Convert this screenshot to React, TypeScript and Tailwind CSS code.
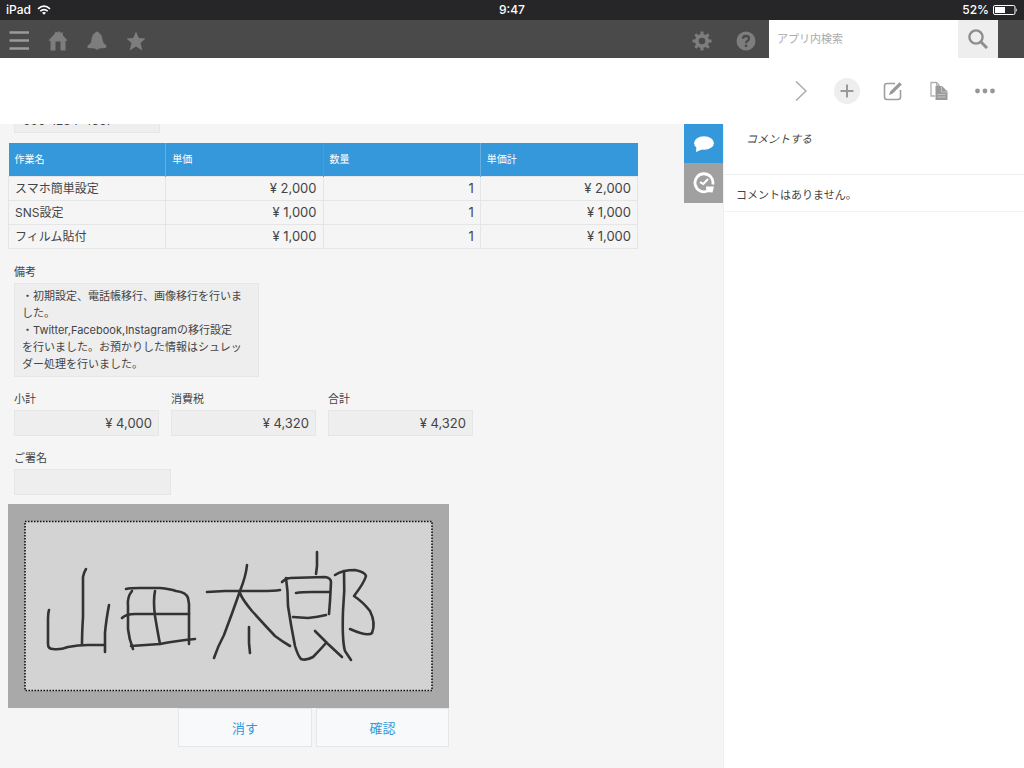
import React, { useState } from 'react';

interface WorkRow {
  name: string;
  price: string;
  count: string;
  total: string;
}

interface FieldProps {
  id: string;
  label: string;
  value: string;
  widthClass: string;
}

const workRows: WorkRow[] = [
  { name: 'スマホ簡単設定', price: '¥ 2,000', count: '1', total: '¥ 2,000' },
  { name: 'SNS設定', price: '¥ 1,000', count: '1', total: '¥ 1,000' },
  { name: 'フィルム貼付', price: '¥ 1,000', count: '1', total: '¥ 1,000' },
];

const remarks = [
  '・初期設定、電話帳移行、画像移行を行いま',
  'した。',
  '・Twitter,Facebook,Instagramの移行設定',
  'を行いました。お預かりした情報はシュレッ',
  'ダー処理を行いました。',
];

// One path per pen stroke
const signatureStrokes = [
  'M49 609 Q48 612 48 618 L48 643 Q48 648 53 648 Q60 649 68 646 Q78 644 88 644 L104 644',
  'M86 568 Q84 571 83 576 L83 616 Q82 632 82 643',
  'M109 604 Q106 620 105 632 L105 651',
  'M126 588 Q130 587 140 587 L160 587 Q170 588 176 590 Q186 591 188 597 L189 603 L189 643',
  'M132 590 Q127 596 128 605 L128 628 Q129 638 133 648',
  'M155 590 Q153 600 155 615 Q158 633 160 643',
  'M122 617 Q126 613 135 613 L189 613',
  'M131 645 L160 643 Q175 640 195 638',
  'M207 591 L225 590 L260 590 Q275 590 280 589',
  'M247 564 Q246 575 240 590 Q232 613 224 634 Q218 645 214 657',
  'M240 592 Q242 598 252 610 Q262 621 275 635 Q283 641 290 645',
  'M249 626 L249 642 L250 652',
  'M317 551 L317 565 L316 573',
  'M282 581 Q286 577 290 577 L325 576 Q331 577 331 581 L330 600 L329 613',
  'M286 577 Q288 590 288 605 Q291 625 295 645 Q298 655 301 658 Q306 660 313 656 Q320 649 326 642',
  'M296 592 Q302 591 312 591 L330 591',
  'M293 616 L308 617 Q318 616 326 614',
  'M315 630 L328 643 L342 656',
  'M335 574 Q342 569 355 569 Q365 571 366 575 Q364 582 354 595 Q363 601 370 610 Q376 622 372 632 Q368 636 350 628',
  'M344 570 Q345 590 343 610 Q342 640 345 650 L351 659',
];

const StatusBar: React.FC = () => (
  <div className="grid h-5 grid-cols-3 items-center bg-[#262628] px-[6px] text-[12px] leading-5 font-medium text-white">
    <div className="flex items-center gap-[6px]">
      <span>iPad</span>
      <svg width="14" height="10" viewBox="0 0 14 10" fill="none" stroke="white" strokeWidth="1.7">
        <path d="M1 3.8 Q7 -1.6 13 3.8" />
        <path d="M3.3 6.1 Q7 3 10.7 6.1" />
        <path d="M7 9.8 L5 7.8 Q7 6.3 9 7.8 Z" fill="white" stroke="none" />
      </svg>
    </div>
    <span className="text-center">9:47</span>
    <div className="flex items-center justify-end gap-1">
      <span>52%</span>
      <svg width="25" height="10" viewBox="0 0 25 10">
        <rect x="0.5" y="0.5" width="21.5" height="9" rx="1.5" fill="none" stroke="white" />
        <rect x="2" y="2" width="10" height="6" fill="white" />
        <path d="M23.2 3 Q25 5 23.2 7 Z" fill="white" />
      </svg>
    </div>
  </div>
);

const NavBar: React.FC = () => (
  <nav className="flex h-[38px] items-stretch bg-[#4a4a4a] pr-[26px] pl-[9px] text-[#7d7d7d]">
    <div className="flex items-center gap-[19px] pt-1">
      <button aria-label="メニュー">
        <svg width="20" height="20" viewBox="0 0 20 20" stroke="#9a9a9a" strokeWidth="2.4">
          <path d="M0.5 1.5 H20 M0.5 9.5 H20 M0.5 17.5 H20" />
        </svg>
      </button>
      <button aria-label="ホーム">
        <svg width="20" height="20" viewBox="0 0 20 20" fill="currentColor">
          <path d="M0.5 9.5 L6.5 3 L7.5 0.5 L9.5 1.5 L11 0 L13 2 L14.5 1 L15 4.5 L19.5 9.5 L17.5 10 V19.5 H12.5 V10.5 H7.5 V19.5 H2.5 V10 Z" />
        </svg>
      </button>
      <button aria-label="お知らせ">
        <svg width="20" height="20" viewBox="0 0 20 20" fill="currentColor">
          <path d="M8 2 Q8.5 0.5 10 0.5 Q11.5 0.5 12 2 Q15 3.5 15.5 8.5 Q16 12.5 19 14 Q20 16 18.5 17 L12 17.5 Q10 20 8 17.5 L1 17 Q-0.5 15.5 1.5 14 Q4.5 12 4.5 8.5 Q5 3.5 8 2 Z" />
        </svg>
      </button>
      <button aria-label="お気に入り">
        <svg width="20" height="20" viewBox="0 0 20 20" fill="currentColor">
          <path d="M10 0.5 L12.8 7 L19.5 7.5 L14.5 12 L16.3 19.5 L10 15.5 L3.7 19.5 L5.5 12 L0.5 7.5 L7.2 7 Z" />
        </svg>
      </button>
    </div>
    <div className="ml-auto flex items-center gap-6 pt-1 pr-[13px]">
      <button aria-label="設定">
        <svg width="20" height="20" viewBox="-10 -10 20 20" fill="none" stroke="currentColor">
          <circle r="5.2" strokeWidth="3.8" />
          <path
            d="M0 -9.5 V-6 M0 6 V9.5 M-9.5 0 H-6 M6 0 H9.5 M-6.7 -6.7 L-4.5 -4.5 M4.5 4.5 L6.7 6.7 M-6.7 6.7 L-4.5 4.5 M4.5 -4.5 L6.7 -6.7"
            strokeWidth="3"
          />
        </svg>
      </button>
      <button aria-label="ヘルプ">
        <svg width="20" height="20" viewBox="0 0 20 20" fill="none">
          <circle cx="10" cy="10" r="9.5" fill="#7d7d7d" />
          <path d="M7 7.8 Q7 5 10 5 Q13 5 13 7.6 Q13 9 11.3 10 Q10 10.8 10 12.3" stroke="#4a4a4a" strokeWidth="2.3" />
          <circle cx="10" cy="14.8" r="1.4" fill="#4a4a4a" />
        </svg>
      </button>
    </div>
    <form className="flex" onSubmit={(e) => e.preventDefault()}>
      <input
        type="text"
        aria-label="アプリ内検索"
        placeholder="アプリ内検索"
        className="w-[189px] bg-white px-2 text-[11px] text-[#333333] outline-none placeholder:text-[#aaaaaa]"
      />
      <button aria-label="検索" className="flex w-10 items-center justify-center bg-[#eeeeee]">
        <svg width="20" height="20" viewBox="0 0 20 20" fill="none" stroke="#8e8e8e" strokeWidth="2.4">
          <circle cx="8" cy="8" r="6.6" />
          <path d="M12.8 12.8 L19 19" strokeWidth="3" />
        </svg>
      </button>
    </form>
  </nav>
);

const Toolbar: React.FC = () => (
  <div className="flex h-[66px] items-center justify-end gap-5 bg-white pr-[26px]">
    <button aria-label="次へ" className="flex w-[26px] justify-center">
      <svg width="12" height="20" viewBox="0 0 12 20" fill="none" stroke="#aaaaaa" strokeWidth="1.5">
        <path d="M1 0.5 L11 10 L1 19.5" />
      </svg>
    </button>
    <button aria-label="追加" className="flex size-[26px] items-center justify-center rounded-full bg-[#eeeeee]">
      <svg width="14" height="14" viewBox="0 0 14 14" stroke="#999999" strokeWidth="2">
        <path d="M7 0.5 V13.5 M0.5 7 H13.5" />
      </svg>
    </button>
    <button aria-label="編集" className="flex w-[26px] justify-center">
      <svg width="20" height="20" viewBox="0 0 20 20" fill="none" stroke="#a0a0a0" strokeWidth="1.6">
        <path d="M12 2.5 H4 Q1.5 2.5 1.5 5 V16 Q1.5 18.5 4 18.5 H15 Q17.5 18.5 17.5 16 V9" />
        <path d="M6 14 L7.2 10.5 L16.5 1.2 L18.8 3.5 L9.5 12.8 Z" fill="#999999" stroke="none" />
      </svg>
    </button>
    <button aria-label="複製" className="flex w-[26px] justify-center">
      <svg width="18" height="20" viewBox="0 0 18 20" fill="none">
        <path d="M5 15 H1 V1.5 H6.5 L9.5 4.5" stroke="#b0b0b0" strokeWidth="1.3" />
        <path d="M6.5 1.5 V4.5 H9.5" stroke="#b0b0b0" />
        <path d="M5.5 5 H12 L17.5 10.5 V19 H5.5 Z" fill="#9a9a9a" />
        <path d="M11.5 5.5 V11 H17 M7.5 13.5 H15.5 M7.5 16 H15.5" stroke="#c4c4c4" />
      </svg>
    </button>
    <button aria-label="その他" className="flex w-[26px] justify-center">
      <svg width="20" height="6" viewBox="0 0 20 6" fill="#969696">
        <circle cx="2.5" cy="3" r="2.4" />
        <circle cx="10" cy="3" r="2.4" />
        <circle cx="17.5" cy="3" r="2.4" />
      </svg>
    </button>
  </div>
);

const Field: React.FC<FieldProps> = ({ id, label, value, widthClass }) => (
  <div className={`flex flex-col ${widthClass}`}>
    <label htmlFor={id} className="text-[11px] leading-[22px]">
      {label}
    </label>
    <input
      id={id}
      readOnly
      value={value}
      className="h-[26px] w-full border border-[#e6e6e6] bg-[#eeeeee] px-[6px] text-right text-[13px] outline-none"
    />
  </div>
);

const WorkTable: React.FC = () => (
  <table className="mt-[10px] w-[630px] table-fixed border-collapse text-[12px]">
    <thead>
      <tr className="h-[33px] bg-[#3498db] text-left text-[10px] text-white">
        <th className="px-[6px] font-normal">作業名</th>
        <th className="border-l border-[#62afe3] px-[6px] font-normal">単価</th>
        <th className="border-l border-[#3f9fdf] px-[6px] font-normal">数量</th>
        <th className="border-l border-[#62afe3] px-[6px] font-normal">単価計</th>
      </tr>
    </thead>
    <tbody>
      {workRows.map((row) => (
        <tr key={row.name} className="h-6 leading-[23px]">
          <td className="border border-[#e5e5e5] px-[6px] py-0">{row.name}</td>
          <td className="border border-[#e5e5e5] px-[6px] py-0 text-right text-[13px]">{row.price}</td>
          <td className="border border-[#e5e5e5] px-[6px] py-0 text-right text-[13px]">{row.count}</td>
          <td className="border border-[#e5e5e5] px-[6px] py-0 text-right text-[13px]">{row.total}</td>
        </tr>
      ))}
    </tbody>
  </table>
);

const SignaturePad: React.FC = () => {
  const [strokes, setStrokes] = useState(signatureStrokes);

  return (
    <div className="mt-[9px] w-[441px]">
      <div className="bg-[#a9a9a9] p-4">
        <svg
          viewBox="24 519 409 172"
          className="block h-[172px] w-full"
          fill="none"
          stroke="#333333"
          strokeWidth="2.6"
          strokeLinecap="round"
          strokeLinejoin="round"
        >
          <rect
            x="25"
            y="520.5"
            width="407"
            height="169"
            fill="#d3d3d3"
            stroke="#111111"
            strokeWidth="1.6"
            strokeDasharray="1.5 1.5"
            strokeLinecap="butt"
          />
          {strokes.map((d) => (
            <path key={d} d={d} />
          ))}
        </svg>
      </div>
      <div className="flex justify-end gap-1 text-[13px] text-[#3498db]">
        <button onClick={() => setStrokes([])} className="h-[39px] w-[134px] border border-[#e3e7e8] bg-[#f7f9fa] pt-1">
          消す
        </button>
        <button className="h-[39px] w-[133px] border border-[#e3e7e8] bg-[#f7f9fa] pt-1">確認</button>
      </div>
    </div>
  );
};

const RecordPane: React.FC = () => (
  <main className="min-w-0 flex-1 bg-[#f5f5f5] pl-2">
    {/* Phone field, scrolled almost out of view */}
    <div className="flex h-[9px] items-end overflow-hidden pl-[6px]">
      <input
        readOnly
        aria-label="電話番号"
        value="090-1234-4567"
        className="h-[26px] w-[146px] shrink-0 border border-[#e6e6e6] bg-[#eeeeee] px-2 text-[12px] outline-none"
      />
    </div>

    <WorkTable />

    <div className="mt-3 flex flex-col pl-[6px]">
      <label htmlFor="remarks" className="text-[11px] leading-[22px]">
        備考
      </label>
      <textarea
        id="remarks"
        readOnly
        rows={5}
        value={remarks.join('\n')}
        className="block h-[94px] w-[245px] resize-none overflow-hidden border border-[#e6e6e6] bg-[#eeeeee] px-[7px] py-1 text-[11px] leading-[17px] outline-none"
      />
    </div>

    <div className="mt-[11px] flex gap-3 pl-[6px]">
      <Field id="subtotal" label="小計" value="¥ 4,000" widthClass="w-[145px]" />
      <Field id="tax" label="消費税" value="¥ 4,320" widthClass="w-[145px]" />
      <Field id="sum" label="合計" value="¥ 4,320" widthClass="w-[145px]" />
    </div>

    <div className="mt-[11px] pl-[6px]">
      <Field id="sign" label="ご署名" value="" widthClass="w-[157px]" />
    </div>

    <SignaturePad />
  </main>
);

const CommentPane: React.FC = () => (
  <aside className="flex">
    <div className="flex w-[39px] flex-col bg-[#f5f5f5]">
      <button aria-label="コメント" className="flex h-[39px] items-center justify-center bg-[#3498db]">
        <svg width="20" height="16" viewBox="0 0 20 16" fill="white">
          <ellipse cx="10" cy="7" rx="10" ry="6.8" />
          <path d="M2.5 10 L2 16 L9 13 Z" />
        </svg>
      </button>
      <button aria-label="変更履歴" className="flex h-10 items-center justify-center bg-[#a0a0a0]">
        <svg width="22" height="22" viewBox="0 0 22 22" fill="none" stroke="white">
          <path d="M19.8 12.5 A9 9 0 1 0 15 18.8" strokeWidth="2.8" />
          <path d="M13 14.5 L21 14.5 L19.5 20.5 L13.5 20 Z" fill="white" stroke="none" />
          <path d="M7 10.2 L10.3 12 L15 7" strokeWidth="2" />
        </svg>
      </button>
    </div>
    <div className="w-[301px] border-l border-[#f0f0f0] bg-white text-[11px]">
      <button className="block h-[51px] w-full border-b border-[#eeeeee] px-[22px] pb-5 text-left italic">
        コメントする
      </button>
      <p className="border-b border-[#f3f3f3] px-3 pt-1 leading-8">コメントはありません。</p>
    </div>
  </aside>
);

const App: React.FC = () => {
  return (
    <div className="flex min-h-screen flex-col bg-white font-['Inter','Noto_Sans_CJK_JP',sans-serif] text-[#444444]">
      <StatusBar />
      <NavBar />
      <Toolbar />
      <div className="flex flex-1 items-stretch">
        <RecordPane />
        <CommentPane />
      </div>
    </div>
  );
};

export default App;
